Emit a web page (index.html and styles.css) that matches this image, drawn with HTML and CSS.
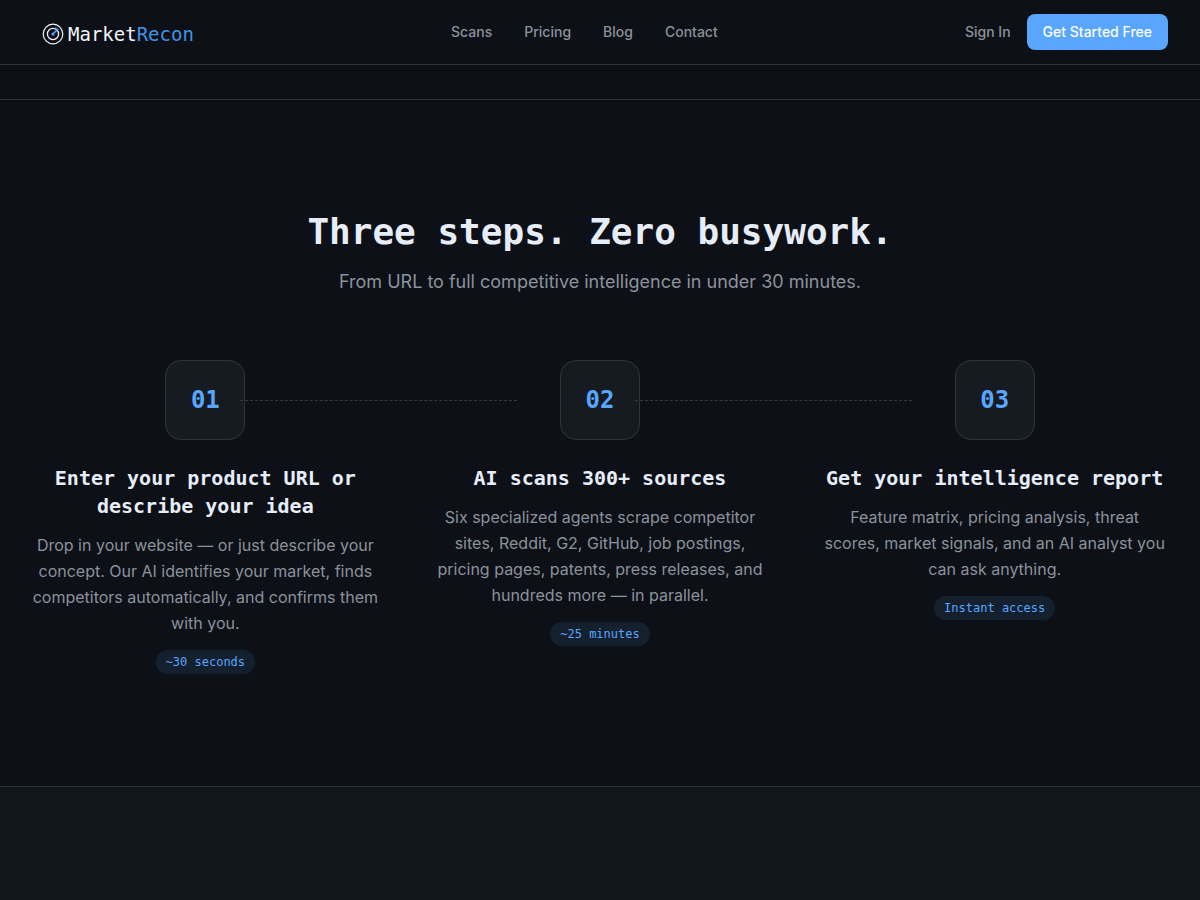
FILE: index.html
```html
<!DOCTYPE html>
<html lang="en">
<head>
    <meta charset="UTF-8">
    <meta name="viewport" content="width=device-width, initial-scale=1.0">
    <title>MarketRecon</title>
    <link rel="stylesheet" href="styles.css">
</head>
<body>

<header class="navbar">
    <a class="logo" href="#">
        <svg class="logo-icon" viewBox="0 0 22 22" fill="none" aria-hidden="true">
            <circle cx="11" cy="11" r="9.8" stroke="#f0f6fc" stroke-width="1.2"/>
            <circle cx="11" cy="11" r="5.6" stroke="#f0f6fc" stroke-width="1.3"/>
            <path d="M11 11 L13.4 3.4 A8 8 0 0 1 17.4 6.4 Z" fill="#58a6ff" opacity="0.35"/>
            <path d="M11 11 L15.8 6.4" stroke="#58a6ff" stroke-width="1.3"/>
            <circle cx="11" cy="11" r="1.6" fill="#58a6ff"/>
        </svg>
        <span>Market<span class="logo-accent">Recon</span></span>
    </a>
    <nav class="nav-links">
        <a href="#">Scans</a>
        <a href="#">Pricing</a>
        <a href="#">Blog</a>
        <a href="#">Contact</a>
    </nav>
    <div class="nav-actions">
        <a href="#">Sign In</a>
        <button type="button" class="btn-primary">Get Started Free</button>
    </div>
</header>

<main>
    <!-- How it works -->
    <section class="how-it-works">
        <h2>Three steps. Zero busywork.</h2>
        <p class="subtitle">From URL to full competitive intelligence in under 30 minutes.</p>

        <div class="steps">
            <div class="step">
                <div class="step-number">01</div>
                <h3>Enter your product URL or describe your idea</h3>
                <p>Drop in your website — or just describe your concept. Our AI identifies your market, finds competitors automatically, and confirms them with you.</p>
                <span class="badge">~30 seconds</span>
            </div>
            <div class="step">
                <div class="step-number">02</div>
                <h3>AI scans 300+ sources</h3>
                <p>Six specialized agents scrape competitor sites, Reddit, G2, GitHub, job postings, pricing pages, patents, press releases, and hundreds more — in parallel.</p>
                <span class="badge">~25 minutes</span>
            </div>
            <div class="step">
                <div class="step-number">03</div>
                <h3>Get your intelligence report</h3>
                <p>Feature matrix, pricing analysis, threat scores, market signals, and an AI analyst you can ask anything.</p>
                <span class="badge">Instant access</span>
            </div>
        </div>
    </section>

    <section class="next-section"></section>
</main>

</body>
</html>
```
FILE: styles.css
```css
* {
    box-sizing: border-box;
}

body {
    margin: 0;
    min-height: 100vh;
    display: flex;
    flex-direction: column;
    background-color: #0d1017;
    color: #8b929b;
    font-family: Inter, sans-serif;
    font-size: 16px;
}

h2, h3, p {
    margin: 0;
}

a {
    color: inherit;
    text-decoration: none;
}

/* Navbar */
.navbar {
    display: flex;
    align-items: center;
    justify-content: space-between;
    height: 65px;
    padding: 0 32px;
    border-bottom: 1px solid #30353c;
    font-size: 14px;
    font-weight: 500;
    line-height: 20px;
}

.logo {
    display: flex;
    align-items: center;
    gap: 4px;
    padding: 4px 10px 0;
    color: #f0f6fc;
    font-family: "DejaVu Sans Mono", monospace;
    font-size: 19px;
    font-weight: 400;
}

.logo-icon {
    width: 22px;
    height: 22px;
}

.logo-accent {
    color: #4493e6;
}

.nav-links {
    display: flex;
    gap: 32px;
}

.nav-actions {
    display: flex;
    align-items: center;
    gap: 16px;
}

.nav-links a:hover, .nav-actions a:hover {
    color: #e6edf3;
}

.btn-primary {
    padding: 8px 16px;
    border: none;
    border-radius: 8px;
    background-color: #58a6ff;
    color: white;
    font: inherit;
    cursor: pointer;
}

/* Page sections */
main {
    flex: 1;
    display: flex;
    flex-direction: column;
    padding-top: 34px;
}

.how-it-works {
    padding: 112px 32px;
    border-top: 1px solid #30353c;
    text-align: center;
}

h2, h3, .step-number, .badge {
    font-family: "DejaVu Sans Mono", monospace;
}

h2 {
    color: #e6edf7;
    font-size: 36px;
    line-height: 40px;
}

.subtitle {
    margin-top: 16px;
    font-size: 18px;
    line-height: 28px;
}

/* Steps */
.steps {
    display: grid;
    grid-template-columns: repeat(3, 1fr);
    gap: 48px;
    margin-top: 64px;
}

.step {
    position: relative;
}

/* Dashed connector to the next step */
.step:not(:last-child)::after {
    content: "";
    position: absolute;
    top: 40px;
    left: 60%;
    width: 80%;
    border-top: 1px dashed #363b42;
}

.step-number {
    display: flex;
    align-items: center;
    justify-content: center;
    width: 80px;
    height: 80px;
    margin: 0 auto 24px;
    border: 1px solid #30353c;
    border-radius: 16px;
    background-color: #161b21;
    color: #58a6ff;
    font-size: 24px;
    font-weight: 700;
}

.step h3 {
    margin-bottom: 12px;
    color: #e6edf7;
    font-size: 20px;
    line-height: 28px;
}

.step p {
    line-height: 26px;
}

.badge {
    display: block;
    width: fit-content;
    margin: 14px auto 0;
    padding: 4px 10px;
    border-radius: 12px;
    background-color: #14202e;
    color: #58a6ff;
    font-size: 12px;
    line-height: 16px;
}

.next-section {
    flex: 1;
    min-height: 112px;
    border-top: 1px solid #30353c;
    background-color: #11161d;
}
```
